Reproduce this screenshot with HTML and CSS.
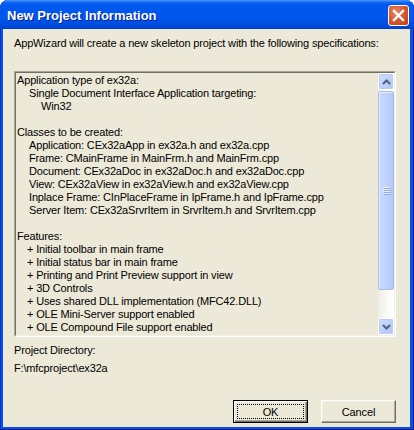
FILE: index.html
```html
<!DOCTYPE html>
<html>
<head>
<meta charset="utf-8">
<title>New Project Information</title>
<link rel="stylesheet" href="styles.css">
</head>
<body>
<div class="window">
  <div class="titlebar">
    <span class="title">New Project Information</span>
    <div class="close">
      <svg width="19" height="19" viewBox="0 0 19 19"><path d="M5 5 L14 14 M14 5 L5 14" stroke="#fff" stroke-width="2.4" stroke-linecap="square" fill="none"/></svg>
    </div>
  </div>
  <div class="client">
    <div class="intro">AppWizard will create a new skeleton project with the following specifications:</div>
    <div class="box">
      <div class="box-inner">
        <div class="content">
          <div class="l1">Application type of ex32a:</div>
          <div class="l2">Single Document Interface Application targeting:</div>
          <div class="l3">Win32</div>
          <div class="blank"></div>
          <div class="l1">Classes to be created:</div>
          <div class="l2">Application: CEx32aApp in ex32a.h and ex32a.cpp</div>
          <div class="l2">Frame: CMainFrame in MainFrm.h and MainFrm.cpp</div>
          <div class="l2">Document: CEx32aDoc in ex32aDoc.h and ex32aDoc.cpp</div>
          <div class="l2">View: CEx32aView in ex32aView.h and ex32aView.cpp</div>
          <div class="l2">Inplace Frame: CInPlaceFrame in IpFrame.h and IpFrame.cpp</div>
          <div class="l2">Server Item: CEx32aSrvrItem in SrvrItem.h and SrvrItem.cpp</div>
          <div class="blank"></div>
          <div class="l1">Features:</div>
          <div class="lf">+ Initial toolbar in main frame</div>
          <div class="lf">+ Initial status bar in main frame</div>
          <div class="lf">+ Printing and Print Preview support in view</div>
          <div class="lf">+ 3D Controls</div>
          <div class="lf">+ Uses shared DLL implementation (MFC42.DLL)</div>
          <div class="lf">+ OLE Mini-Server support enabled</div>
          <div class="lf">+ OLE Compound File support enabled</div>
        </div>
        <div class="scrollbar">
          <div class="sb-btn">
            <svg width="9" height="6" viewBox="0 0 9 6"><path d="M1 5 L4.5 1.5 L8 5" stroke="#4D6185" stroke-width="2" fill="none"/></svg>
          </div>
          <div class="sb-thumb">
            <div class="grip"></div>
            <div class="grip"></div>
            <div class="grip"></div>
            <div class="grip"></div>
          </div>
          <div class="sb-track"></div>
          <div class="sb-btn">
            <svg width="9" height="6" viewBox="0 0 9 6"><path d="M1 1 L4.5 4.5 L8 1" stroke="#4D6185" stroke-width="2" fill="none"/></svg>
          </div>
        </div>
      </div>
    </div>
    <div class="label">Project Directory:</div>
    <div class="path">F:\mfcproject\ex32a</div>
    <div class="buttons">
      <button class="btn default"><span>OK</span></button>
      <button class="btn">Cancel</button>
    </div>
  </div>
</div>
</body>
</html>
```
FILE: styles.css
```css
html, body {
  margin: 0;
  padding: 0;
  background: #ffffff;
}

.window {
  width: 414px;
  height: 430px;
  display: flex;
  flex-direction: column;
  background: #0A50E2;
  border-radius: 8px 8px 0 0;
  box-shadow: inset -1px -1px 0 #001890, inset 1px 0 0 #0831D9;
  overflow: hidden;
  font-family: "Liberation Sans", Arial, sans-serif;
  font-size: 11px;
  color: #000;
}

.titlebar {
  height: 29px;
  flex: none;
  display: flex;
  align-items: center;
  padding-left: 7px;
  padding-right: 5px;
  background: linear-gradient(to bottom,
    #3D90F6 0px, #3D90F6 1px,
    #1467F2 2px, #0059EF 5px,
    #0056EC 17px, #004FE2 23px,
    #0048D6 27px, #003DC2 29px);
  border-radius: 8px 8px 0 0;
}

.title {
  font-family: "Liberation Sans", Arial, sans-serif;
  font-weight: bold;
  font-size: 13px;
  color: #fff;
  text-shadow: 1px 1px 0 #0A1E8C;
  margin-top: 2px;
}

.close {
  margin-left: auto;
  margin-top: 2px;
  width: 19px;
  height: 19px;
  border: 1px solid #fff;
  border-radius: 3px;
  background: radial-gradient(circle at 35% 30%, #E98A68 0%, #DA5A32 45%, #C63B14 100%);
  display: flex;
  align-items: center;
  justify-content: center;
}

.close svg {
  display: block;
}

.client {
  flex: 1;
  margin: 0 4px 3px 3px;
  background: #ECE9D8;
  padding: 8px 14px 0 11px;
  display: flex;
  flex-direction: column;
  line-height: 13px;
  letter-spacing: -0.16px;
}

.intro {
  height: 13px;
  white-space: nowrap;
}

.box {
  margin-top: 21px;
  height: 264px;
  border: 1px solid;
  border-color: #ACA899 #FFFFFF #FFFFFF #ACA899;
  flex: none;
}

.box-inner {
  border: 1px solid;
  border-color: #716F64 #F1EFE2 #F1EFE2 #716F64;
  display: flex;
  box-sizing: border-box;
  height: 100%;
}

.content {
  flex: 1;
  overflow: hidden;
  padding-top: 1px;
  white-space: nowrap;
}

.content div {
  height: 13px;
}

.l1 { padding-left: 1px; }
.l2 { padding-left: 13px; }
.l3 { padding-left: 25px; }
.lf { padding-left: 11px; }

.scrollbar {
  width: 16px;
  flex: none;
  display: flex;
  flex-direction: column;
  background: linear-gradient(to right, #EEEDE5, #FBFBF8 60%, #FFFFFF);
}

.sb-btn {
  height: 15px;
  flex: none;
  border: 1px solid #fff;
  border-radius: 2px;
  background: linear-gradient(135deg, #D2DEFD 0%, #C0D1FB 50%, #B0C4F4 100%);
  display: flex;
  align-items: center;
  justify-content: center;
  box-shadow: inset 0 0 0 1px #BACCF6;
}

.sb-btn svg {
  display: block;
}

.sb-thumb {
  height: 197px;
  flex: none;
  margin-top: 1px;
  border: 1px solid #A8BDF0;
  border-radius: 2px;
  background: linear-gradient(to right, #CAD8FD 0%, #C1D2FC 50%, #B5C8F8 100%);
  box-shadow: inset 1px 1px 0 #E6EDFE;
  display: flex;
  flex-direction: column;
  align-items: center;
  justify-content: center;
  gap: 1px;
}

.grip {
  width: 7px;
  height: 1px;
  background: #EEF3FE;
  box-shadow: 1px 1px 0 #8CA8EC;
}

.sb-track {
  flex: 1;
}

.label {
  margin-top: 7px;
  height: 13px;
}

.path {
  margin-top: 5px;
  height: 13px;
}

.buttons {
  margin-top: 25px;
  display: flex;
  justify-content: flex-end;
  gap: 13px;
}

.btn {
  width: 75px;
  height: 23px;
  padding: 0;
  margin: 0;
  font-family: "Liberation Sans", Arial, sans-serif;
  font-size: 11px;
  letter-spacing: -0.1px;
  color: #000;
  background: #ECE9D8;
  border: 1px solid;
  border-color: #FFFFFF #716F64 #716F64 #FFFFFF;
  box-shadow: inset -1px -1px 0 #ACA899, inset 1px 1px 0 #F1EFE2;
  display: flex;
  align-items: center;
  justify-content: center;
}

.btn.default {
  border: 1px solid #000;
  box-shadow: inset 1px 1px 0 #FFFFFF, inset -1px -1px 0 #716F64, inset -2px -2px 0 #ACA899;
  outline: 1px dotted #000;
  outline-offset: -5px;
}
```
